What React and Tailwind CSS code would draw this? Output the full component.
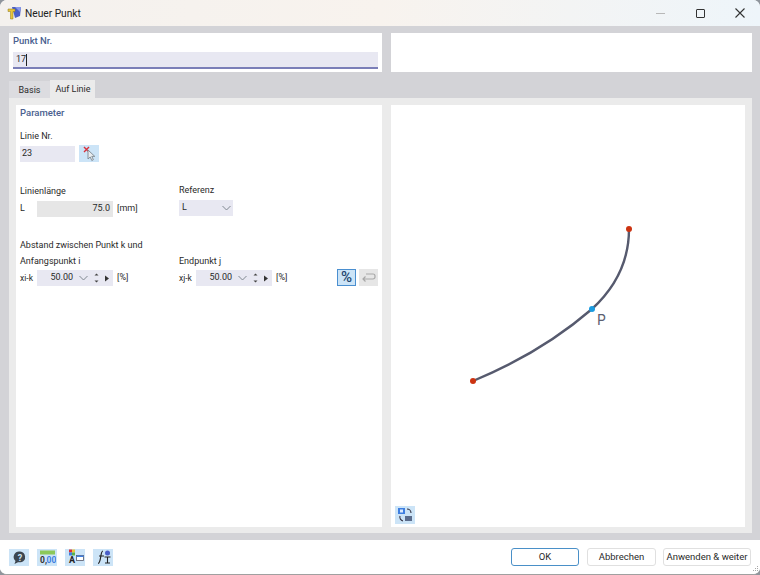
const labelColor = "text-[#4a5f8f]";

const IconButton = ({ className = "", children }) => (
	<button
		type="button"
		className={`flex h-[17px] w-[20px] items-center justify-center bg-[#cce4f7] ${className}`}
	>
		{children}
	</button>
);

const PickIcon = () => (
	<svg width="18" height="16" viewBox="0 0 18 16">
		<path d="M4 1l5 5M9 1L4 6" stroke="#d8303a" strokeWidth="1.400" />
		<path d="M8 4v9l2.200-2 1.600 3.500 1.600-.8-1.600-3.300h3z" fill="#e8ecef" stroke="#7d8790" strokeWidth="0.900" />
	</svg>
);

const Spinner = () => (
	<div className="flex items-center">
		<svg width="9" height="14" viewBox="0 0 9 14" className="ml-[4px]">
			<path d="M2.500 4.500L4.500 2.500l2 2z" fill="#444" />
			<path d="M2.500 9.500l2 2 2-2z" fill="#444" />
		</svg>
		<svg width="6" height="7" viewBox="0 0 6 7" className="ml-[3px]">
			<path d="M1 0.500l4 3-4 3z" fill="#333" />
		</svg>
	</div>
);

const Chevron = () => (
	<svg width="9" height="6" viewBox="0 0 9 6">
		<path d="M0.500 1l4 4 4-4" fill="none" stroke="#808890" strokeWidth="1" />
	</svg>
);

const NumberRow = ({ prefix }) => (
	<div className="flex h-[16px] items-center">
		<span className="w-[17px] text-[8.500px]">{prefix}</span>
		<div className="flex h-[16px] w-[76px] items-center bg-[#e8e8f2] pr-[3px]">
			<span className="w-[40px] text-right">50.00</span>
			<span className="ml-[6px]"><Chevron /></span>
			<Spinner />
		</div>
		<span className="ml-[4px]">[%]</span>
	</div>
);

const App = () => {
	return (
		<div
			className="h-[575px] w-[760px] overflow-hidden bg-[#8f959c] text-[9px] text-[#2a2a2a]"
			style={{ fontFamily: 'Roboto, "Noto Sans", sans-serif' }}
		>
			<div className="flex h-full flex-col overflow-hidden rounded-[7px] border-b border-[#a0a0a0] bg-white">
				{/* Titelleiste */}
				<div className="flex h-[26px] shrink-0 items-center bg-gradient-to-r from-[#f4f1ee] via-[#f8f3ee] to-[#eef5fa] pl-[7px]">
					<svg width="15" height="14" viewBox="0 0 15 14">
						<path d="M5 1h9l-1 9-5 2z" fill="#4a5fc8" />
						<path d="M8 1h6l-1 5z" fill="#8a9ae8" />
						<path d="M1 3h7v2.500H6V13H3.500V5.500H1z" fill="#e8c53a" stroke="#8a7420" strokeWidth="0.500" />
					</svg>
					<span className="ml-[3px] pt-[1px] text-[10.200px] text-[#222]">Neuer Punkt</span>
					<div className="ml-auto flex items-center">
						<div className="h-px w-[9px] bg-[#b8b8b8]" />
						<div className="ml-[31px] h-[9px] w-[9px] rounded-[1px] border-[1.500px] border-[#333]" />
						<svg width="10" height="10" viewBox="0 0 10 10" className="ml-[30px] mr-[15px]">
							<path d="M0.500 0.500l9 9M9.500 0.500l-9 9" stroke="#333" strokeWidth="1.100" />
						</svg>
					</div>
				</div>

				{/* Hauptbereich */}
				<div className="flex h-[514px] shrink-0 flex-col bg-[#d3d3d7] pb-[7px] pl-[9px] pr-[8px] pt-[7px]">
					<div className="flex h-[39px] shrink-0 gap-[9px]">
						<div className="w-[373px] bg-white px-[4px] pt-[1px]">
							<div className={`h-[18px] text-[9.500px] font-medium leading-[14px] ${labelColor}`}>Punkt Nr.</div>
							<div className="flex h-[17px] items-center border-b-2 border-[#7b7fb8] bg-[#e8e8f2] pl-[3px]">
								17<span className="h-[12px] w-px bg-[#222]" />
							</div>
						</div>
						<div className="flex-1 bg-white" />
					</div>

					<div className="mt-[8px] flex h-[18px] shrink-0">
						<div className="flex h-[17px] w-[41px] items-center justify-center self-end bg-[#dcdce0] pt-[2px]">Basis</div>
						<div className="flex w-[45px] items-center justify-center bg-[#ebebeb] pl-[1px] pt-[2px]">Auf Linie</div>
					</div>

					<div className="flex min-h-0 flex-1 gap-[9px] bg-[#ebebeb] pb-[6px] pl-[7px] pr-[7px] pt-[7px]">
						{/* Parameter */}
						<div className="w-[366px] bg-white px-[4px]">
							<div className={`mt-[1px] h-[14px] text-[9.500px] font-medium leading-[14px] ${labelColor}`}>Parameter</div>
							<div className="mt-[9px] h-[13px] leading-[15px]">Linie Nr.</div>
							<div className="mt-[3px] flex items-center">
								<div className="flex h-[16px] w-[55px] items-center bg-[#e8e8f2] pl-[2px]">23</div>
								<IconButton className="ml-[4px] h-[16px]"><PickIcon /></IconButton>
							</div>

							<div className="mt-[21px] flex">
								<div className="w-[159px]">
									<div className="mt-[1px] h-[13px] leading-[15px]">Linienlänge</div>
									<div className="mt-[4px] flex h-[16px] items-center">
										<span className="w-[17px]">L</span>
										<div className="flex h-[16px] w-[76px] items-center justify-end bg-[#e6e6e6] pr-[3px]">75.0</div>
										<span className="ml-[4px]">[mm]</span>
									</div>
								</div>
								<div>
									<div className="h-[13px] leading-[15px]">Referenz</div>
									<div className="mt-[4px] flex h-[16px] w-[54px] items-center justify-between bg-[#e8e8f2] pl-[3px] pr-[2px]">
										L<Chevron />
									</div>
								</div>
							</div>

							<div className="mt-[21px] h-[13px] leading-[15px]">Abstand zwischen Punkt k und</div>
							<div className="mt-[3px] flex">
								<div className="w-[159px]">
									<div className="h-[13px] leading-[15px]">Anfangspunkt i</div>
									<div className="mt-[3px]"><NumberRow prefix="xi-k" /></div>
								</div>
								<div>
									<div className="h-[13px] leading-[15px]">Endpunkt j</div>
									<div className="mt-[3px]"><NumberRow prefix="xj-k" /></div>
								</div>
								<div className="ml-auto mt-[15px] flex gap-[3px]">
									<button type="button" className="flex h-[17px] w-[19px] items-center justify-center border border-[#4a8fd0] bg-[#cce4f7] text-[15px] font-medium leading-none text-[#22466e]">%</button>
									<button type="button" className="flex h-[17px] w-[19px] items-center justify-center bg-[#e6e6e6]">
										<svg width="15" height="11" viewBox="0 0 15 11">
											<path d="M5 2h7a2 2 0 0 1 2 2v1a2 2 0 0 1-2 2H2M4.500 4.500L2 7l2.500 2.500" fill="none" stroke="#a8a8a8" strokeWidth="1.200" />
										</svg>
									</button>
								</div>
							</div>
						</div>

						{/* Vorschau */}
						<div className="flex flex-1 flex-col bg-white">
							<svg viewBox="0 0 354 400" className="h-[400px] w-[354px] shrink-0">
								<path d="M82 276Q150 248 201 204Q238 170 238 124" fill="none" stroke="#565a6e" strokeWidth="2.400" />
								<circle cx="82" cy="276" r="3" fill="#cc3311" />
								<circle cx="238" cy="124" r="3" fill="#cc3311" />
								<circle cx="201" cy="204" r="3" fill="#1a9be0" />
								<text x="206" y="220" fontSize="14" fill="#5c6070" fontFamily="Inter, sans-serif">P</text>
							</svg>
							<IconButton className="ml-[4px] mt-[1px] h-[18px] w-[19px]">
								<svg width="17" height="16" viewBox="0 0 17 16">
									<rect x="1" y="1" width="7" height="6" fill="#3f7fe0" />
									<rect x="3" y="2.500" width="3" height="3" fill="#dcecff" />
									<rect x="8" y="9" width="7" height="5" fill="#5a6c8c" />
									<path d="M10 2a4 4 0 0 1 4 4M6 14a4 4 0 0 1-3-5" fill="none" stroke="#334" strokeWidth="1.100" />
								</svg>
							</IconButton>
						</div>
					</div>
				</div>

				{/* Fußleiste */}
				<div className="relative flex flex-1 items-center bg-white pl-[9px] pr-[9px]">
					<div className="flex gap-[8px]">
						<IconButton>
							<svg width="15" height="15" viewBox="0 0 15 15">
								<path d="M8 1.500a5.500 5.500 0 0 1 1 10.800H6L2.500 14l1-3A5.500 5.500 0 0 1 8 1.500z" fill="#3d4650" />
								<text x="8" y="10.500" fontSize="9" fontWeight="700" textAnchor="middle" fill="#cce4f7">?</text>
							</svg>
						</IconButton>
						<IconButton>
							<svg width="17" height="15" viewBox="0 0 17 15">
								<rect x="1" y="0.500" width="15" height="4" fill="#8cc85a" />
								<text x="1" y="13" fontSize="8.500" fontWeight="700" fill="#333">0,</text>
								<text x="7.500" y="13" fontSize="8.500" fontWeight="700" fill="#3f7fe0">00</text>
							</svg>
						</IconButton>
						<IconButton>
							<svg width="17" height="16" viewBox="0 0 17 16">
								<rect x="2" y="0.500" width="3" height="3" fill="#d8303a" />
								<rect x="5" y="0.500" width="3" height="3" fill="#e8c53a" />
								<rect x="2" y="3.500" width="3" height="3" fill="#3f7fe0" />
								<rect x="5" y="3.500" width="3" height="3" fill="#5ab04a" />
								<text x="2" y="13.500" fontSize="9" fontWeight="700" fill="#222">A</text>
								<rect x="9.500" y="6.500" width="7" height="5" fill="#fff" stroke="#556" strokeWidth="0.800" />
								<rect x="9.500" y="6.500" width="7" height="1.500" fill="#3f7fe0" />
							</svg>
						</IconButton>
						<IconButton>
							<svg width="17" height="16" viewBox="0 0 17 16">
								<path d="M8 2C5 2 6.500 14 3 14.500" fill="none" stroke="#222" strokeWidth="1.200" />
								<path d="M4 7h5" stroke="#222" strokeWidth="1" />
								<circle cx="12.500" cy="4" r="2.500" fill="#4a5fc8" />
								<path d="M9.500 8h6M12.500 8v6M10 14h5" fill="none" stroke="#222" strokeWidth="1.100" />
							</svg>
						</IconButton>
					</div>
					<div className="ml-auto flex gap-[7px] whitespace-nowrap text-[9.500px]">
						<button type="button" className="mr-[1px] h-[18px] w-[68px] rounded-[3px] border border-[#4a90c8] bg-white leading-none">OK</button>
						<button type="button" className="h-[18px] w-[69px] rounded-[3px] border border-[#e0e0e0] bg-white leading-none">Abbrechen</button>
						<button type="button" className="h-[18px] w-[88px] rounded-[3px] border border-[#e0e0e0] bg-white leading-none">Anwenden &amp; weiter</button>
					</div>
					<svg width="8" height="8" viewBox="0 0 8 8" className="absolute bottom-[1px] right-[1px]">
						<path d="M6 1h1v1H6zM4 3h1v1H4zM6 3h1v1H6zM2 5h1v1H2zM4 5h1v1H4zM6 5h1v1H6z" fill="#a8a8a8" />
					</svg>
				</div>
			</div>
		</div>
	);
};

export default App;
